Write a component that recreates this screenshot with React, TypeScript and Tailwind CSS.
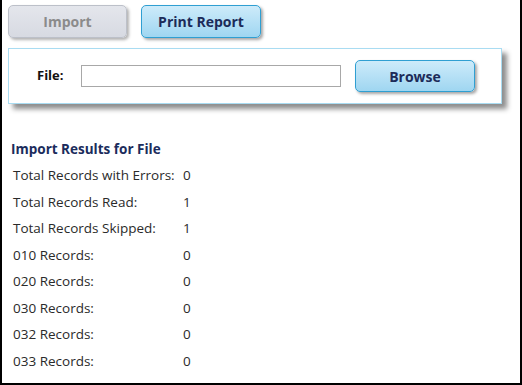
import React from 'react';

const rows: [string, string][] = [
  ['Total Records with Errors:', '0'],
  ['Total Records Read:', '1'],
  ['Total Records Skipped:', '1'],
  ['010 Records:', '0'],
  ['020 Records:', '0'],
  ['030 Records:', '0'],
  ['032 Records:', '0'],
  ['033 Records:', '0'],
];

const blueBtn =
  'rounded-[5px] border border-[#2f9fd2] bg-gradient-to-b from-[#cdebfa] to-[#9fd6f1] font-bold text-[14px] text-[#1c2b59] shadow-[2px_2px_3px_rgba(0,0,0,0.35)]';

export default function App() {
  return (
    <div className="w-[522px] h-[385px] bg-white border-l-2 border-r-2 border-b-2 border-black font-['Open_Sans',sans-serif] overflow-hidden">
      <div className="flex gap-[14px] pl-[6px] pt-[5px]">
        <button className="w-[119px] h-[33px] rounded-[5px] border border-[#bcc0c9] bg-gradient-to-b from-[#e4e6ec] to-[#d7dae2] font-bold text-[14px] text-[#8b8b8b] shadow-[2px_2px_3px_rgba(0,0,0,0.3)]">
          Import
        </button>
        <button className={`w-[120px] h-[33px] ${blueBtn}`}>Print Report</button>
      </div>

      <div className="ml-[6px] mt-[10px] w-[494px] h-[56px] border border-[#a9dcf2] bg-white shadow-[5px_5px_5px_rgba(0,0,0,0.45)] flex items-center">
        <span className="ml-[28px] w-[44px] font-bold text-[13px] text-[#111]">File:</span>
        <input className="w-[260px] h-[22px] border border-[#a8a8a8] bg-white outline-none" />
        <button className={`ml-[14px] w-[120px] h-[32px] ${blueBtn}`}>Browse</button>
      </div>

      <div className="pl-[9px] pt-[35px]">
        <h3 className="font-bold text-[13.5px] text-[#1b2c5c] leading-[20px]">Import Results for File</h3>
        <div className="pl-[2px] pt-[3px]">
          {rows.map(([label, value]) => (
            <div key={label} className="flex h-[26.5px] items-center text-[13.5px] text-[#2a2a2a]">
              <span className="w-[170px]">{label}</span>
              <span>{value}</span>
            </div>
          ))}
        </div>
      </div>
    </div>
  );
}
